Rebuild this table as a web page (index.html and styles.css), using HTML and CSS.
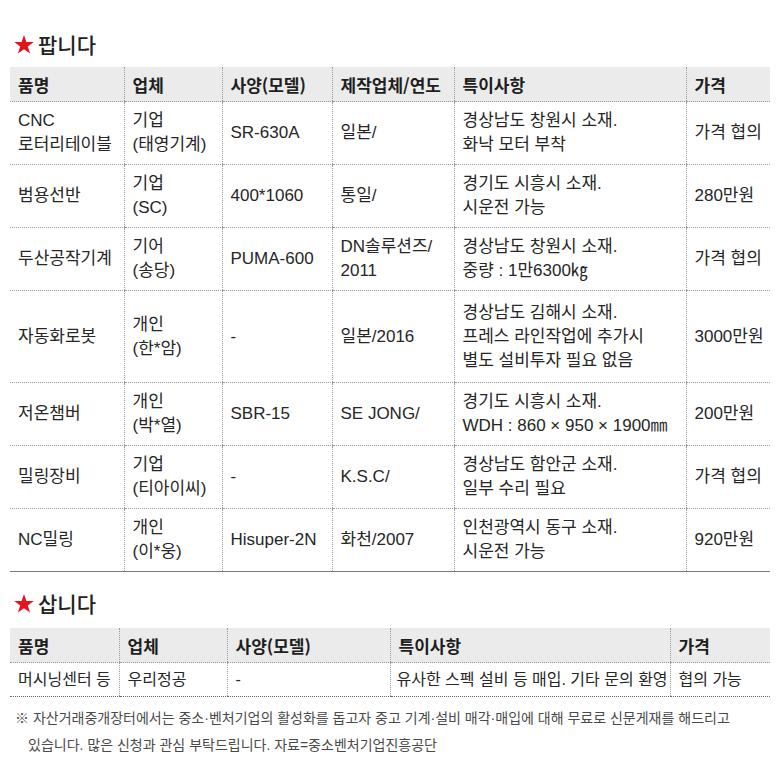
FILE: index.html
```html
<!DOCTYPE html>
<html lang="ko">
<head>
<meta charset="utf-8">
<title>팝니다 / 삽니다</title>
<link rel="stylesheet" href="styles.css">
</head>
<body>
<div class="page">
  <h2 class="title"><svg class="star" viewBox="0 0 20 19" width="20" height="19"><polygon points="10,0 12.4,7 19.8,7 13.8,11.4 16.1,18.6 10,14.2 3.9,18.6 6.2,11.4 0.2,7 7.6,7" fill="#e3141b"/></svg><span>팝니다</span></h2>
  <table class="grid sell">
    <colgroup><col class="s1"><col class="s2"><col class="s3"><col class="s4"><col class="s5"><col class="s6"></colgroup>
    <thead>
      <tr><th>품명</th><th>업체</th><th>사양(모델)</th><th>제작업체/연도</th><th>특이사항</th><th>가격</th></tr>
    </thead>
    <tbody>
      <tr><td>CNC<br>로터리테이블</td><td>기업<br>(태영기계)</td><td>SR-630A</td><td>일본/</td><td>경상남도 창원시 소재.<br>화낙 모터 부착</td><td>가격 협의</td></tr>
      <tr><td>범용선반</td><td>기업<br>(SC)</td><td>400*1060</td><td>통일/</td><td>경기도 시흥시 소재.<br>시운전 가능</td><td>280만원</td></tr>
      <tr><td>두산공작기계</td><td>기어<br>(송당)</td><td>PUMA-600</td><td>DN솔루션즈/<br>2011</td><td>경상남도 창원시 소재.<br>중량 : 1만6300㎏</td><td>가격 협의</td></tr>
      <tr class="tall"><td>자동화로봇</td><td>개인<br>(한*암)</td><td>-</td><td>일본/2016</td><td>경상남도 김해시 소재.<br>프레스 라인작업에 추가시<br>별도 설비투자 필요 없음</td><td>3000만원</td></tr>
      <tr><td>저온챔버</td><td>개인<br>(박*열)</td><td>SBR-15</td><td>SE JONG/</td><td>경기도 시흥시 소재.<br>WDH : 860 × 950 × 1900㎜</td><td>200만원</td></tr>
      <tr><td>밀링장비</td><td>기업<br>(티아이씨)</td><td>-</td><td>K.S.C/</td><td>경상남도 함안군 소재.<br>일부 수리 필요</td><td>가격 협의</td></tr>
      <tr><td>NC밀링</td><td>개인<br>(이*웅)</td><td>Hisuper-2N</td><td>화천/2007</td><td>인천광역시 동구 소재.<br>시운전 가능</td><td>920만원</td></tr>
    </tbody>
  </table>

  <h2 class="title second"><svg class="star" viewBox="0 0 20 19" width="20" height="19"><polygon points="10,0 12.4,7 19.8,7 13.8,11.4 16.1,18.6 10,14.2 3.9,18.6 6.2,11.4 0.2,7 7.6,7" fill="#e3141b"/></svg><span>삽니다</span></h2>
  <table class="grid buy">
    <colgroup><col class="b1"><col class="b2"><col class="b3"><col class="b4"><col class="b5"></colgroup>
    <thead>
      <tr><th>품명</th><th>업체</th><th>사양(모델)</th><th>특이사항</th><th>가격</th></tr>
    </thead>
    <tbody>
      <tr><td>머시닝센터 등</td><td>우리정공</td><td>-</td><td class="tight">유사한 스펙 설비 등 매입. 기타 문의 환영</td><td>협의 가능</td></tr>
    </tbody>
  </table>

  <p class="note">※ 자산거래중개장터에서는 중소·벤처기업의 활성화를 돕고자 중고 기계·설비 매각·매입에 대해 무료로 신문게재를 해드리고<br><span class="indent">있습니다. 많은 신청과 관심 부탁드립니다. 자료=중소벤처기업진흥공단</span></p>
</div>
</body>
</html>
```
FILE: styles.css
```css
html, body {
  margin: 0;
  padding: 0;
  background: #ffffff;
}
body {
  font-family: "Liberation Sans", "Noto Sans CJK KR", sans-serif;
  color: #262626;
}
.page {
  padding: 0 10px;
  width: 760px;
}
.title {
  margin: 0;
  padding-top: 21px;
  height: 46px;
  display: flex;
  align-items: center;
  gap: 4px;
  font-size: 21px;
  font-weight: 500;
  font-family: "Noto Sans CJK KR", sans-serif;
  color: #222;
}
.title .star {
  margin-left: 4px;
  flex: none;
}
.title.second {
  padding-top: 6px;
  height: 50px;
}
.grid {
  width: 760px;
  border-collapse: collapse;
  table-layout: fixed;
  font-size: 17px;
}
.grid th, .grid td {
  text-align: left;
  vertical-align: middle;
  padding: 0 4px 0 8px;
  border-left: 1px dotted #9a9a9a;
  border-bottom: 1px dotted #9a9a9a;
  white-space: nowrap;
}
.grid th:first-child, .grid td:first-child {
  border-left: none;
}
.grid th {
  background: #ebebeb;
  font-weight: bold;
  height: 34px;
  font-family: "Noto Sans CJK KR", sans-serif;
  color: #1e1e1e;
}
.sell td {
  line-height: 24px;
  height: 62px;
}
.sell tr.tall td {
  height: 91px;
}
.sell tbody tr:last-child td {
  border-bottom: 1px solid #7a7a7a;
}
.buy td {
  height: 33px;
  line-height: 24px;
  font-size: 16px;
}
.buy tbody tr:last-child td {
  border-bottom: 1px dotted #666;
}
.buy td.tight {
  padding-left: 6px;
}
.s1 { width: 114px; }
.s2 { width: 98px; }
.s3 { width: 110px; }
.s4 { width: 122px; }
.s5 { width: 232px; }
.s6 { width: 84px; }
.b1 { width: 109px; }
.b2 { width: 108px; }
.b3 { width: 163px; }
.b4 { width: 280px; }
.b5 { width: 100px; }
.note {
  margin: 8px 0 0 0;
  padding-left: 5px;
  font-size: 14px;
  line-height: 27px;
  color: #4a4a4a;
  white-space: nowrap;
  font-family: "Liberation Sans", "Noto Sans CJK KR", sans-serif;
}
.note .indent {
  padding-left: 13px;
}
```
